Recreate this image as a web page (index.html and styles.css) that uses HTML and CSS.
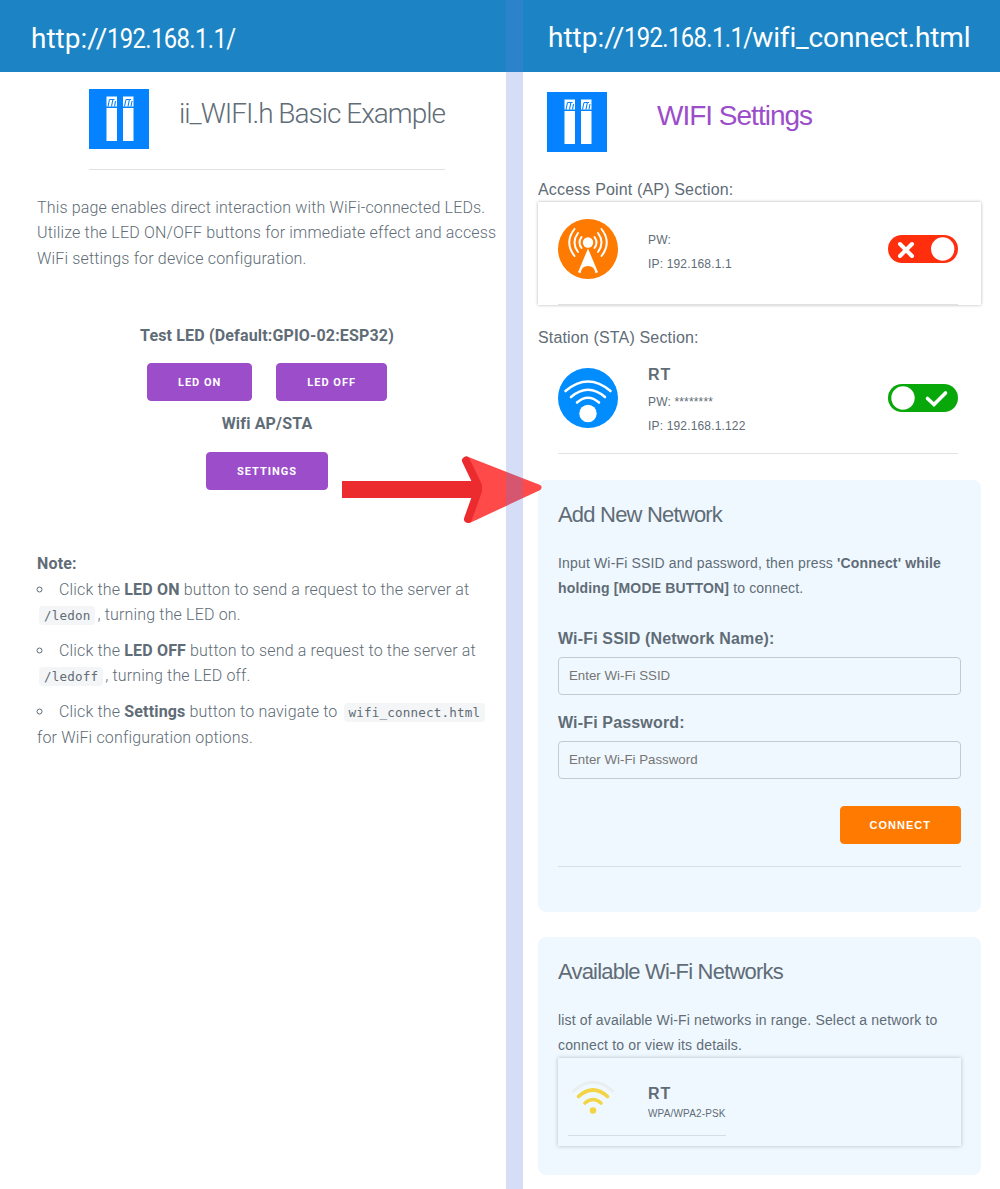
FILE: index.html
```html
<!DOCTYPE html>
<html lang="en">
<head>
<meta charset="utf-8">
<title>ii_WIFI.h Basic Example</title>
<link rel="stylesheet" href="styles.css">
</head>
<body>
<svg class="defs" width="0" height="0">
  <symbol id="logo" viewBox="0 0 60 60">
    <rect width="60" height="60" fill="#0482ff"/>
    <path fill="#fff" d="M17.500 19h10.500v33h-10.500zM34 19h10.500v33h-10.500zM17.500 7.500h10.500v10h-10.500zM34 7.500h10.500v10h-10.500z"/>
    <path fill="none" stroke="#0482ff" stroke-width="1.100" d="M20.500 10.500l-1.500 7M20.500 10.500h5M23.800 11l-1.300 6.500M26.500 12l-1 5.500M37 10.500l-1.500 7M37 10.500h5M40.300 11l-1.300 6.500M43 12l-1 5.500"/>
  </symbol>
</svg>
<main class="screens">
  <section class="screen screen-home">
    <header class="url-bar"><span>http://</span><span class="url-ip">192.168.1.1/</span></header>
    <div class="brand">
      <svg class="logo"><use href="#logo"/></svg>
      <h1 class="title">ii_WIFI.h Basic Example</h1>
    </div>
    <div class="home-body">
      <p class="intro">This page enables direct interaction with WiFi-connected LEDs. Utilize the LED ON/OFF buttons for immediate effect and access WiFi settings for device configuration.</p>
      <div class="controls">
        <strong>Test LED (Default:GPIO-02:ESP32)</strong>
        <div class="button-row">
          <button class="button">LED ON</button>
          <button class="button">LED OFF</button>
        </div>
        <strong>Wifi AP/STA</strong>
        <div class="button-row"><button class="button">SETTINGS</button></div>
      </div>
      <strong class="note-title">Note:</strong>
      <ul class="notes">
        <li>Click the <strong>LED ON</strong> button to send a request to the server at <code>/ledon</code>, turning the LED on.</li>
        <li>Click the <strong>LED OFF</strong> button to send a request to the server at <code>/ledoff</code>, turning the LED off.</li>
        <li>Click the <strong>Settings</strong> button to navigate to <code>wifi_connect.html</code> for WiFi configuration options.</li>
      </ul>
    </div>
  </section>

  <section class="screen screen-settings">
    <header class="url-bar url-bar-wide"><span>http://</span><span class="url-ip">192.168.1.1/</span><span class="url-page">wifi_connect.html</span></header>
    <div class="settings-body">
      <div class="settings-brand">
        <svg class="logo"><use href="#logo"/></svg>
        <h1 class="title title-accent">WIFI Settings</h1>
      </div>

      <div class="section-label">Access Point (AP) Section:</div>
      <div class="device device-card">
        <div class="device-row">
          <svg class="device-icon" viewBox="0 0 60 60">
            <circle cx="30" cy="30" r="30" fill="#ff7a00"/>
            <circle cx="30" cy="23.500" r="5.200" fill="#fff"/>
            <path fill="#fff" d="M30 29.500L40 53.300L37.500 54.300Q36.500 47 30 47Q23.500 47 22.500 54.300L20 53.300z"/>
            <g fill="none" stroke="#fff" stroke-width="2" stroke-linecap="round">
              <path d="M23.500 18Q19.500 23.500 23.500 29M20 14Q13 23.500 20 33M16.500 10Q6 23.500 16.500 37"/>
              <path d="M36.500 18Q40.500 23.500 36.500 29M40 14Q47 23.500 40 33M43.500 10Q54 23.500 43.500 37"/>
            </g>
          </svg>
          <div class="device-info"><span>PW:</span><span>IP: 192.168.1.1</span></div>
          <svg class="toggle" viewBox="0 0 70 28">
            <rect width="70" height="28" rx="14" fill="#ff2e0c"/>
            <circle cx="54.700" cy="14" r="11.700" fill="#fff"/>
            <path d="M12 9l12 12M24 9L12 21" stroke="#fff" stroke-width="4" stroke-linecap="round"/>
          </svg>
        </div>
      </div>

      <div class="section-label section-label-sta">Station (STA) Section:</div>
      <div class="device">
        <div class="device-row">
          <svg class="device-icon" viewBox="0 0 60 60">
            <circle cx="30" cy="30" r="30" fill="#028dff"/>
            <circle cx="30" cy="45.500" r="8.700" fill="#fff"/>
            <path fill="none" stroke="#fff" stroke-width="2.600" stroke-linecap="round" d="M19 34.500Q30 25 41 34.500M13 29Q30 14.500 47 29M7.500 23Q30 4 52.500 23"/>
          </svg>
          <div class="device-info"><b class="ssid">RT</b><span>PW: ********</span><span>IP: 192.168.1.122</span></div>
          <svg class="toggle" viewBox="0 0 70 28">
            <rect width="70" height="28" rx="14" fill="#08a80a"/>
            <circle cx="15" cy="14" r="11.700" fill="#fff"/>
            <path d="M39.500 14.500l6.500 6L57.500 9" fill="none" stroke="#fff" stroke-width="3.600" stroke-linecap="round"/>
          </svg>
        </div>
      </div>

      <form class="panel panel-form">
        <h2 class="panel-title">Add New Network</h2>
        <p class="panel-text">Input Wi-Fi SSID and password, then press <b>'Connect' while holding [MODE BUTTON]</b> to connect.</p>
        <label class="label" for="ssid">Wi-Fi SSID (Network Name):</label>
        <input class="field" id="ssid" type="text" placeholder="Enter Wi-Fi SSID">
        <label class="label" for="password">Wi-Fi Password:</label>
        <input class="field" id="password" type="password" placeholder="Enter Wi-Fi Password">
        <div class="form-actions"><button class="button button-connect" type="button">CONNECT</button></div>
      </form>

      <div class="panel panel-list">
        <h2 class="panel-title">Available Wi-Fi Networks</h2>
        <p class="panel-text">list of available Wi-Fi networks in range. Select a network to connect to or view its details.</p>
        <div class="network">
          <div class="network-row">
            <svg class="signal" viewBox="0 0 44 36">
              <g fill="none" stroke-width="3.600" stroke-linecap="round">
                <path stroke="#e9eeee" stroke-width="3" d="M2.500 11Q22-6.500 41.500 11"/>
                <path stroke="#f2d445" d="M7.500 16.500Q22 3.500 36.500 16.500M14 23Q22 16 30 23"/>
              </g>
              <circle cx="22" cy="30.500" r="3.300" fill="#f2d445"/>
            </svg>
            <div class="network-info"><b class="ssid">RT</b><span>WPA/WPA2-PSK</span></div>
          </div>
        </div>
      </div>
    </div>
  </section>

  <svg class="flow-arrow" width="204" height="70" viewBox="0 0 204 70">
    <path fill="#ff4a4a" stroke="#ff4a4a" stroke-width="6" stroke-linejoin="round" d="M126 6L196.500 33.500L127 66L138 34z"/>
    <path fill="#eb2b2e" d="M0 27h137v17H0z"/>
    <path fill="none" stroke="#eb2b2e" stroke-width="8" stroke-linecap="round" stroke-linejoin="round" d="M124 6.500L136 31.500V37L126 65"/>
  </svg>
  <div class="divider"></div>
</main>
</body>
</html>
```
FILE: styles.css
```css
* { box-sizing: border-box; }

body {
  margin: 0;
  background: #fff;
  color: #606c76;
  font: 300 16px/25.6px Roboto, sans-serif;
  letter-spacing: 0.16px;
}

h1, h2, p, ul { margin: 0; padding: 0; font-weight: 300; }
strong, b { font-weight: 700; }
svg { display: block; flex: none; }
.defs { position: absolute; }

.screens {
  position: relative;
  display: grid;
  grid-template-columns: 523px 477px;
  height: 1189px;
  overflow: hidden;
}

.url-bar {
  display: flex;
  height: 72px;
  padding-left: 31px;
  background: #1c84c4;
  color: #fff;
  font: 400 28px/77px Roboto, sans-serif;
  letter-spacing: 0;
  white-space: nowrap;
}
.url-bar-wide { padding-left: 25px; line-height: 76px; }

/* Condenses the address digits to a narrower, DIN-like set width */
.url-ip {
  flex: none;
  width: 128px;
  letter-spacing: -0.7px;
  transform: scaleX(0.85);
  transform-origin: left;
}
.url-page { letter-spacing: -0.15px; }

.divider {
  position: absolute;
  inset: 0 auto 0 506px;
  width: 17px;
  background: rgba(90, 125, 225, 0.25);
}

.flow-arrow { position: absolute; left: 342px; top: 454px; }

.logo { width: 60px; height: 60px; }

.title {
  font-size: 28px;
  line-height: 36px;
  letter-spacing: -1px;
  white-space: nowrap;
}
.title-accent { color: #9b4dca; }

.brand {
  display: flex;
  gap: 30px;
  width: 356px;
  height: 98px;
  margin-left: 89px;
  padding-top: 17px;
  border-bottom: 1px solid #e1e1e1;
}
.brand .title { padding-top: 7px; }

.home-body { width: 500px; padding: 24.7px 0 0 37px; }

.controls {
  display: flex;
  flex-direction: column;
  align-items: center;
  width: 460px;
  padding-top: 51.3px;
}
.button-row { display: flex; gap: 24px; padding: 15px 0 10px; }

.button {
  height: 38px;
  padding: 1px 30px 0;
  border: 1px solid #9b4dca;
  border-radius: 4px;
  background: #9b4dca;
  color: #fff;
  font: 700 11px/36px Roboto, sans-serif;
  letter-spacing: 1px;
}

.note-title { display: block; margin-top: 51px; }
.notes { list-style: circle inside; }
.notes li { margin-bottom: 10px; }

code {
  margin: 0 2px;
  padding: 2px 5px;
  border-radius: 4px;
  background: #f4f5f6;
  font: 400 12.6px "DejaVu Sans Mono", monospace;
  white-space: nowrap;
}

.screen-settings { font-family: "Liberation Sans", Arial, sans-serif; }
.settings-body { width: 458px; padding-left: 15px; }
.settings-brand { display: flex; gap: 50px; height: 105px; padding: 20px 0 0 9px; }
.settings-brand .title { padding-top: 6px; }

.section-label { height: 25px; }
.section-label-sta { margin-top: 20px; }

.device { height: 104px; padding: 17px 23px 0 20px; }
.device-card { height: 103px; box-shadow: 0 0 3px rgba(0, 0, 0, 0.3); }
.device-row { display: flex; height: 86px; border-bottom: 1px solid #e1e1e1; }
.section-label-sta + .device { padding-top: 18px; height: 105px; }
.device-icon { width: 60px; height: 60px; margin-right: 30px; }
.device-info {
  display: flex;
  flex-direction: column;
  font-size: 12px;
  line-height: 24px;
}
.device-card .device-info { padding-top: 9px; }
.ssid { font-size: 16px; line-height: 26px; letter-spacing: 1px; }
.device-info .ssid { margin: -6px 0 2px; }
.toggle { width: 70px; height: 28px; margin: 16px 0 0 auto; }

.panel { border-radius: 8px; background: #f0f8ff; padding: 20px 20px 0; }
.panel-form { height: 432px; margin-top: 25px; }
.panel-list { height: 238px; margin-top: 25px; }
.panel-title { font-size: 22px; line-height: 29px; letter-spacing: -0.8px; }
.panel-text { margin-top: 22px; font-size: 14px; line-height: 25px; }

.label { display: block; margin-top: 25px; font-weight: 700; line-height: 26px; letter-spacing: 0.16px; }
.field {
  display: block;
  width: 100%;
  height: 38px;
  margin-top: 5px;
  padding: 0 10px 2px;
  border: 1px solid #c2cad3;
  border-radius: 4px;
  background: transparent;
  font: 400 13.3px "Liberation Sans", Arial, sans-serif;
}
.field::placeholder { color: #757575; }
.field + .label { margin-top: 15px; }
.form-actions {
  display: flex;
  justify-content: flex-end;
  height: 88px;
  padding-top: 27px;
  border-bottom: 1px solid #d5dee7;
}
.button-connect {
  padding: 0 29px 1px;
  border-color: #ff7a00;
  background: #ff7a00;
  font-family: "Liberation Sans", Arial, sans-serif;
}

.network {
  width: 403px;
  height: 88px;
  padding: 10px;
  box-shadow: 0 0 4px rgba(0, 0, 0, 0.25);
}
.network-row {
  display: flex;
  width: 158px;
  height: 68px;
  border-bottom: 1px solid #d5dee7;
}
.signal { width: 44px; height: 36px; margin: 12px 33px 0 3px; }
.network-info {
  display: flex;
  flex-direction: column;
  padding-top: 13px;
  font-size: 10px;
  line-height: 14px;
}
```
